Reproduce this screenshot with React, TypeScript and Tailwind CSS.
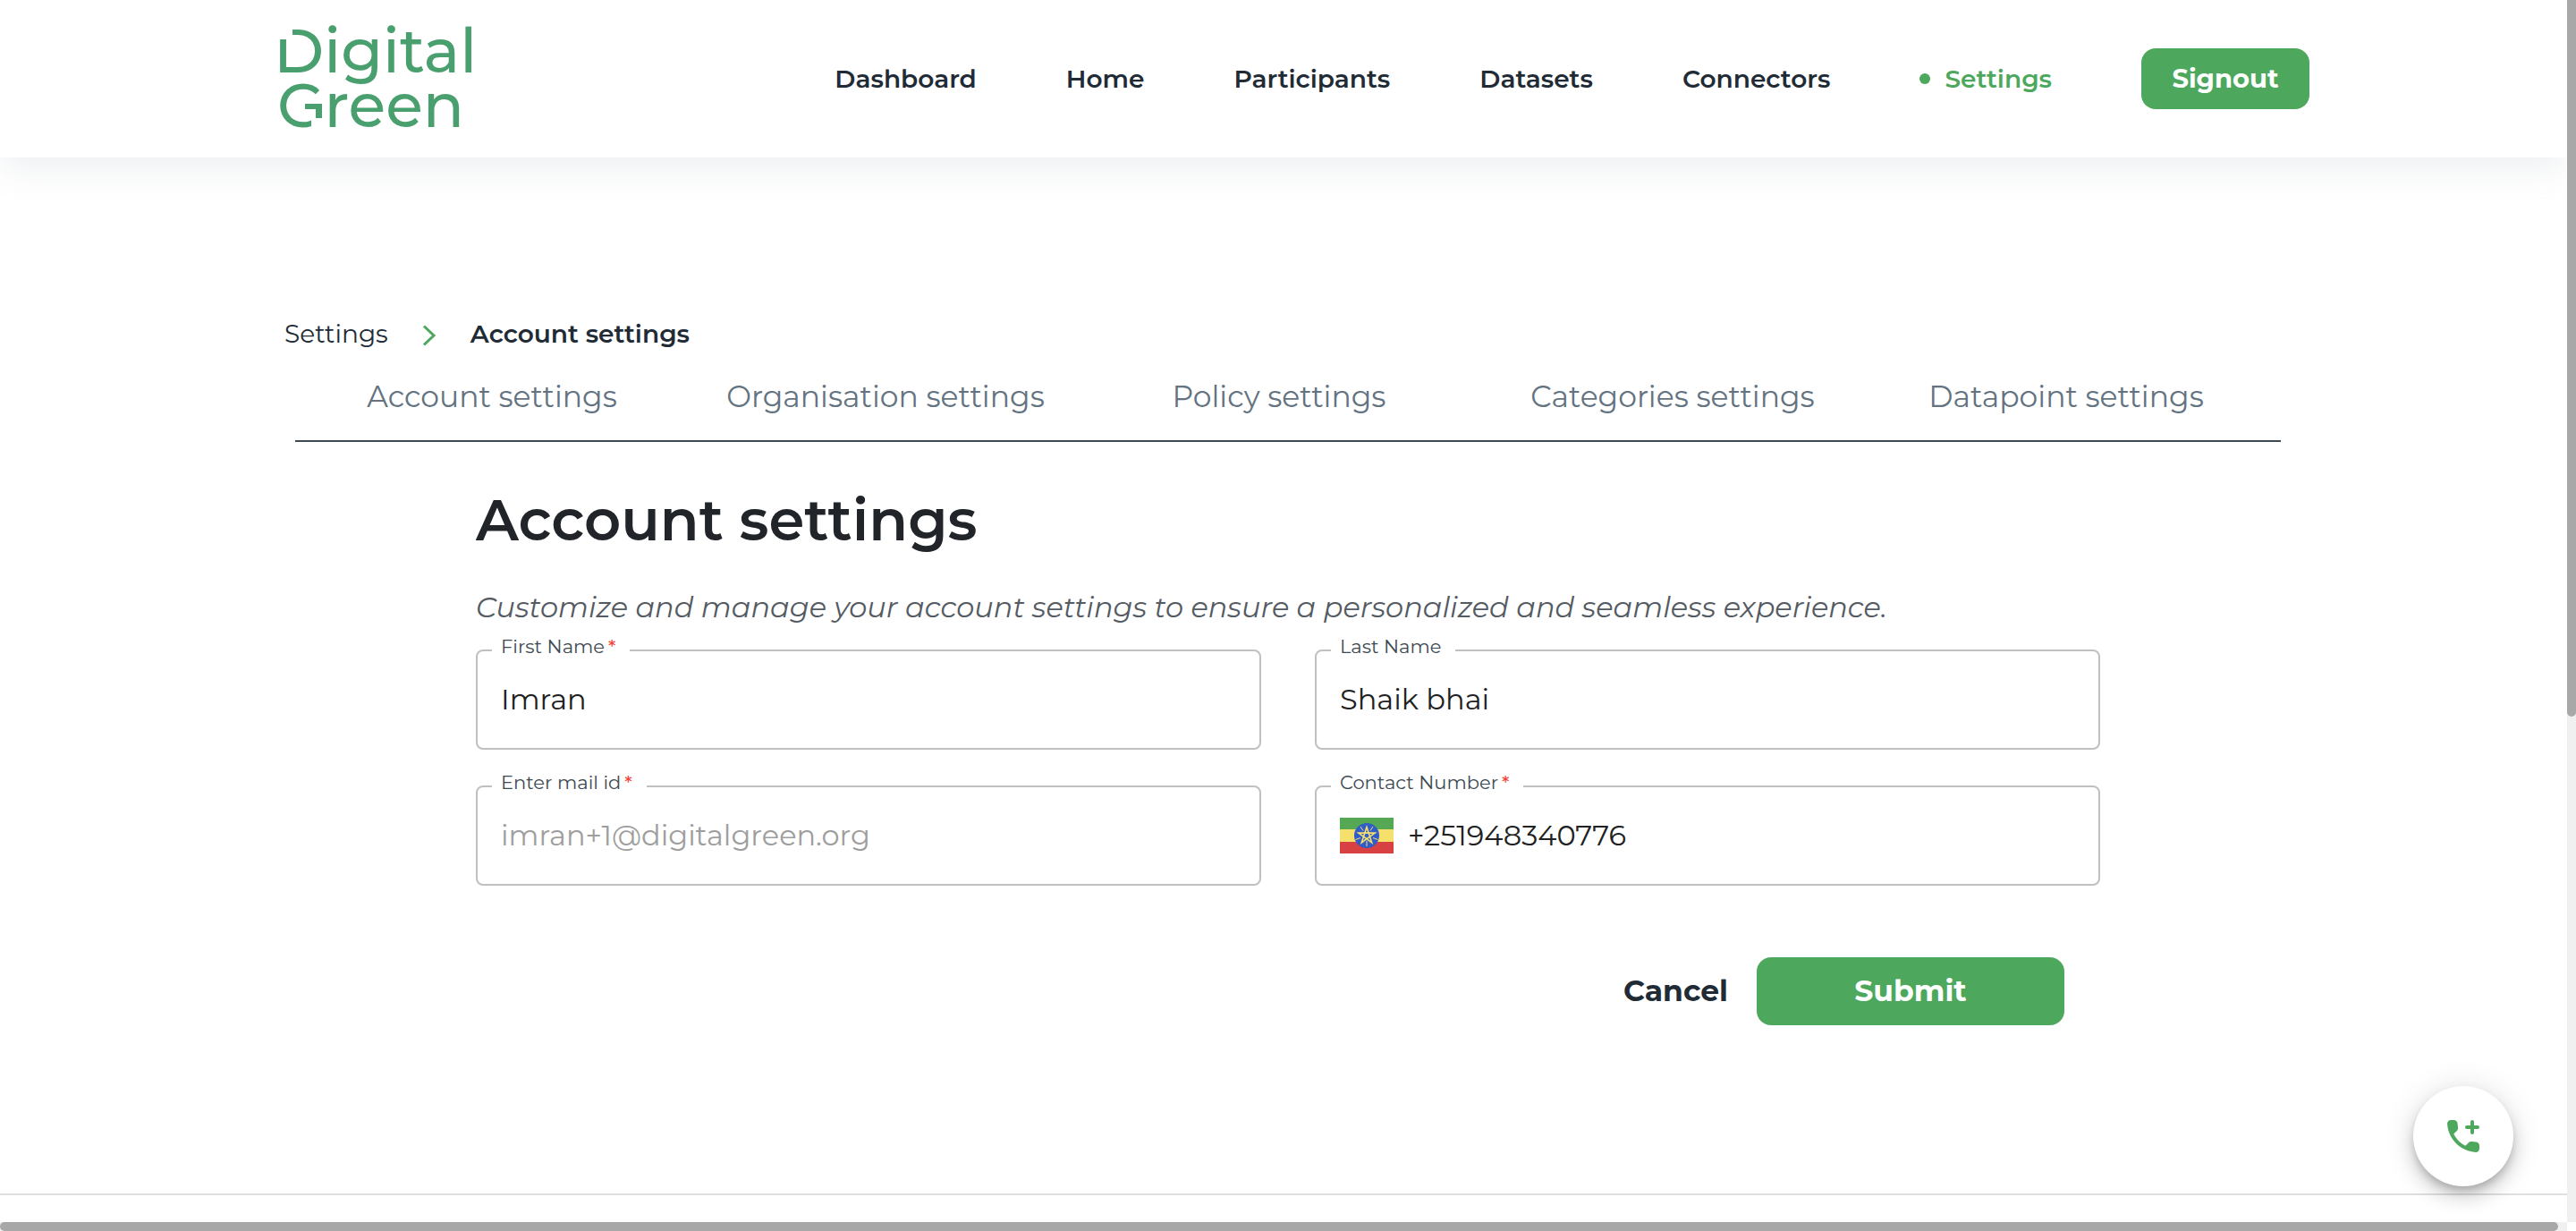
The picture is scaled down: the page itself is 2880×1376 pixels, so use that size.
import type { ReactNode } from "react";

const navLinks = ["Dashboard", "Home", "Participants", "Datasets", "Connectors"];

const tabs = [
  "Account settings",
  "Organisation settings",
  "Policy settings",
  "Categories settings",
  "Datapoint settings",
];

function Logo() {
  return (
    <svg
      viewBox="0 0 300 140"
      role="img"
      aria-label="Digital Green"
      className="ml-5 h-[140px] w-[300px] fill-[#4a9f6e] text-[68px] font-medium"
    >
      <text x="-2" y="63">
        Digital
      </text>
      <text x="2" y="124">
        Green
      </text>
      {/* cut the corner of the D and the foot of the G */}
      <path d="M0 8h19v18H0z" className="fill-white" />
      <path d="M40 95h14v34H40z" className="fill-white" />
      <path d="M33 98h19v16h-7V104H33z" />
    </svg>
  );
}

function Flag() {
  return (
    <svg viewBox="0 0 60 40" role="img" aria-label="Ethiopia" className="h-10 w-[60px] shrink-0">
      <rect width="60" height="40" fill="#f6e06c" />
      <rect width="60" height="13" fill="#55a954" />
      <rect y="27" width="60" height="13" fill="#d84142" />
      <circle cx="30" cy="20" r="14" fill="#325cc8" />
      <g stroke="#f6e06c" fill="none">
        <path
          strokeWidth="1.6"
          strokeLinejoin="miter"
          d="M30 10.500L35.700 27.800L20.800 17.100H39.200L24.300 27.800Z"
        />
        <path strokeWidth="1" d="M30 26v6M23 22.500l-5.500 2M37 22.500l5.500 2M26 14.500l-3-4.500M34 14.500l3-4.500" />
      </g>
    </svg>
  );
}

type FieldProps = {
  id: string;
  label: string;
  value: string;
  type?: string;
  required?: boolean;
  disabled?: boolean;
  icon?: ReactNode;
};

function Field({ id, label, value, type = "text", required, disabled, icon }: FieldProps) {
  return (
    <div className="relative flex h-28 items-center gap-4 rounded-lg border-2 border-[#c0c0c0] px-[26px]">
      <label
        htmlFor={id}
        className="absolute -top-[17px] left-4 bg-white pr-4 pl-[10px] text-[21px] leading-6 text-[#3d4a52]"
      >
        {label}
        {required && <span className="ml-1 font-medium text-[#f44336]">*</span>}
      </label>
      {icon}
      <input
        id={id}
        type={type}
        defaultValue={value}
        required={required}
        disabled={disabled}
        className="h-14 w-full min-w-0 bg-transparent pb-0.5 text-[32px] text-[#212121] outline-none disabled:text-[#9e9e9e]"
      />
    </div>
  );
}

export default function App() {
  return (
    <div className="relative flex h-screen flex-col overflow-hidden bg-white font-['Montserrat','Inter',sans-serif] text-[#212b36]">
      <header className="mr-[10px] shrink-0 shadow-[0_16px_36px_-4px_rgba(145,158,171,0.16)]">
        <div className="mx-auto flex h-44 max-w-[2294px] items-center justify-between">
          <a href="#home">
            <Logo />
          </a>
          <nav className="flex items-center gap-[100px] text-[28px] font-semibold">
            {navLinks.map((item) => (
              <a key={item} href={"#" + item.toLowerCase()}>
                {item}
              </a>
            ))}
            <a href="#settings" aria-current="page" className="flex items-center gap-4 text-[#4da85e]">
              <span className="size-3 rounded-full bg-[#4da85e]" />
              Settings
            </a>
            <button className="h-[68px] w-[188px] rounded-2xl bg-[#4da85e] text-[29px] font-bold text-white">
              Signout
            </button>
          </nav>
        </div>
      </header>

      <main className="grow pt-[175px]">
        <nav aria-label="Breadcrumb" className="mx-auto flex h-11 max-w-[2244px] items-center text-[28px]">
          <a href="#settings">Settings</a>
          <svg
            viewBox="0 0 16 24"
            aria-hidden="true"
            className="mx-[38px] mt-1 h-6 w-4 fill-none stroke-[#4da85e] stroke-3"
          >
            <path d="M2 1.500L13 12L2 22.500" />
          </svg>
          <span className="font-semibold">Account settings</span>
        </nav>

        <div
          role="tablist"
          className="mx-auto grid max-w-[2220px] grid-cols-5 border-b-2 border-[#3d4a52] pr-5"
        >
          {tabs.map((tab) => (
            <button key={tab} role="tab" className="h-[97px] text-[33px] text-[#637381]">
              {tab}
            </button>
          ))}
        </div>

        <form className="mx-auto mt-12 max-w-[1816px]">
          <h1 className="text-[64px] leading-[78px] font-semibold text-[#212529]">Account settings</h1>
          <p className="mt-[39px] text-[32px] leading-10 text-[#545b63] italic">
            Customize and manage your account settings to ensure a personalized and seamless experience.
          </p>
          <div className="mt-[27px] grid grid-cols-2 gap-x-[60px] gap-y-10">
            <Field id="first-name" label="First Name" value="Imran" required />
            <Field id="last-name" label="Last Name" value="Shaik bhai" />
            <Field
              id="email"
              label="Enter mail id"
              type="email"
              value="imran+1@digitalgreen.org"
              required
              disabled
            />
            <Field
              id="phone"
              label="Contact Number"
              type="tel"
              value="+251948340776"
              required
              icon={<Flag />}
            />
          </div>
          <div className="mt-20 flex justify-end gap-8 pr-10 text-[33px] font-bold">
            <button type="button">Cancel</button>
            <button type="button" className="h-[76px] w-[344px] rounded-2xl bg-[#4da85e] text-white">
              Submit
            </button>
          </div>
        </form>
      </main>

      <footer className="h-[42px] shrink-0 border-t-2 border-[#dfdfdf]" />

      <button
        aria-label="Add contact"
        className="absolute right-[70px] bottom-[50px] flex size-28 items-center justify-center rounded-full bg-white shadow-[0_6px_10px_-2px_rgba(0,0,0,0.2),0_12px_20px_0_rgba(0,0,0,0.14),0_2px_36px_0_rgba(0,0,0,0.12)]"
      >
        <svg viewBox="0 0 24 24" aria-hidden="true" className="size-12 fill-[#4da85e]">
          <path d="m19.230 15.260-2.540-.290c-.610-.070-1.210.140-1.640.570l-1.840 1.840c-2.830-1.440-5.150-3.750-6.590-6.590l1.850-1.850c.430-.430.640-1.030.570-1.640l-.290-2.520c-.120-1.010-.970-1.770-1.990-1.770H5.030c-1.130 0-2.070.940-2 2.070.530 8.540 7.360 15.360 15.890 15.890 1.130.070 2.070-.870 2.070-2v-1.730c.010-1.010-.750-1.860-1.760-1.980z" />
          <path d="M17 4v6M14 7h6" className="stroke-[#4da85e] stroke-2 [stroke-linecap:round]" />
        </svg>
      </button>

      <div aria-hidden="true" className="absolute top-0 right-0 bottom-[10px] w-[10px] bg-[#f0f0f0]">
        <div className="h-[801px] rounded-b-full bg-[#a8a8a8]" />
      </div>
      <div aria-hidden="true" className="absolute right-[10px] bottom-0 left-0 h-[10px] bg-[#f0f0f0] pr-[10px]">
        <div className="h-full rounded-full bg-[#a8a8a8]" />
      </div>
    </div>
  );
}
